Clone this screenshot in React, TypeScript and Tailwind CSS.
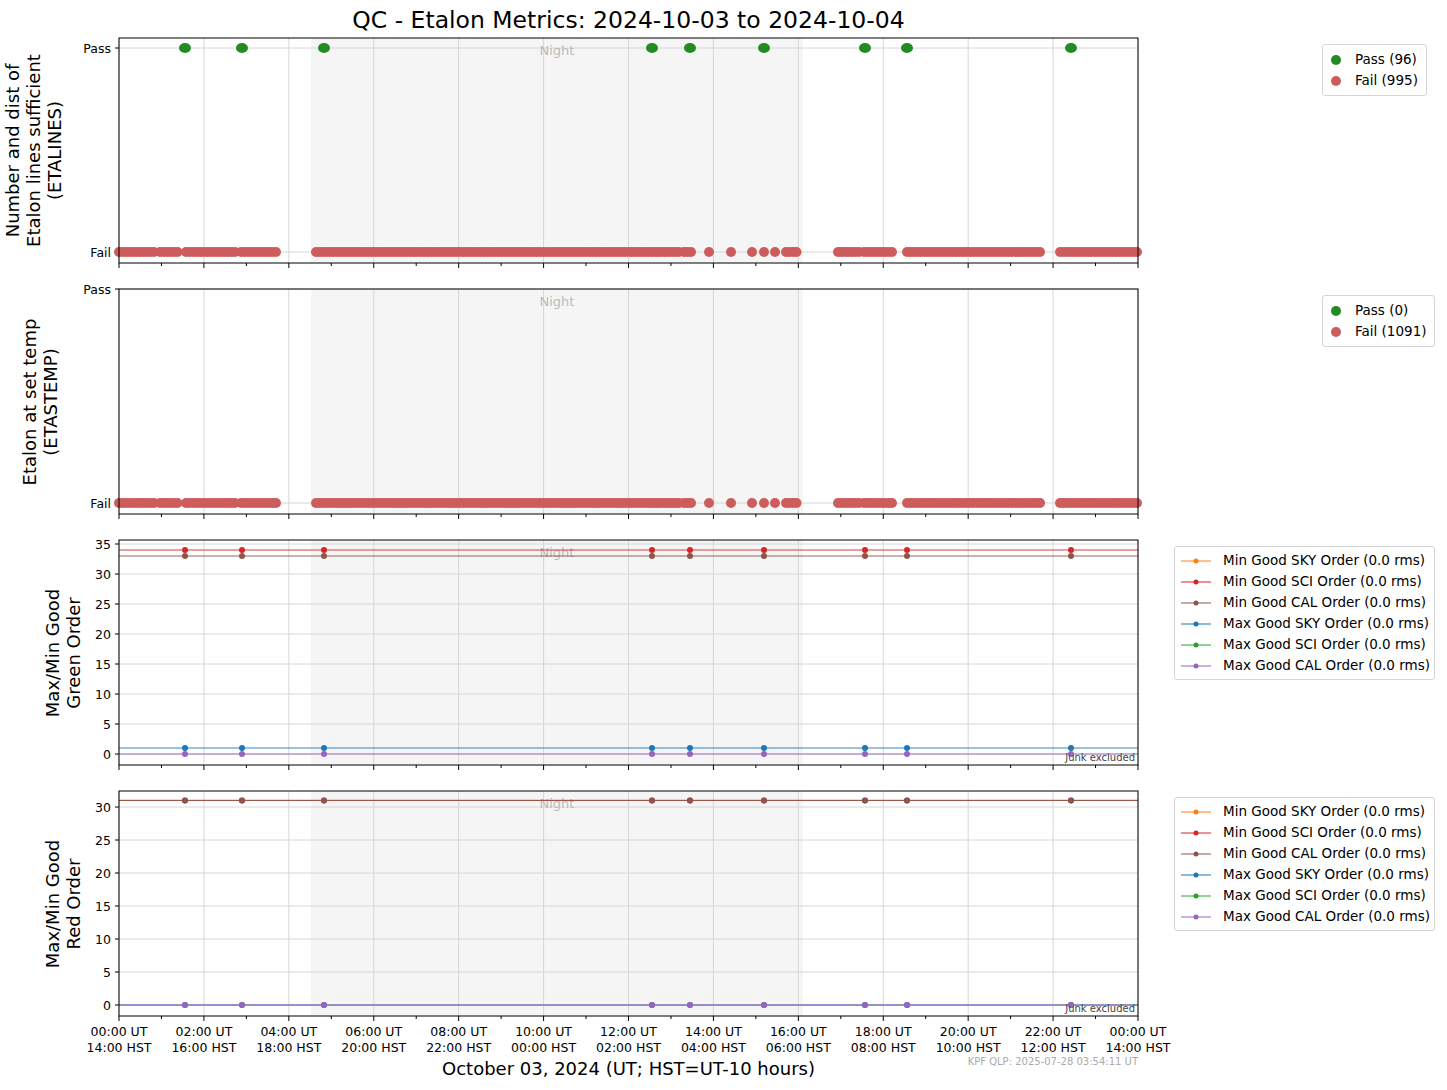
import React from "react";

const PW = 1019, PH = 225, OX = 19;
const hx = (h: number) => OX + (h / 24) * PW;
const passX = [185, 242, 324, 652, 690, 764, 865, 907, 1071].map((x) => x - 100);
const failRanges: [number, number][] = [[119,155],[160,178],[186,235],[241,277],[316,656],[658,680],[684,694],[709,709],[731,731],[752,752],[764,764],[775,775],[786,797],[838,860],[864,895],[907,1040],[1060,1138]];
const failX: number[] = [];
failRanges.forEach(([a, b]) => { for (let x = a; x <= b; x += 3.5) failX.push(x - 100); });

function Frame({ children, yTicks, bottomLabels, junk }: { children: React.ReactNode; yTicks: [number, string][]; bottomLabels?: boolean; junk?: boolean }) {
  const minor = Array.from({ length: 25 }, (_, i) => i);
  return (
    <svg width={1045} height={bottomLabels ? 262 : 226} style={{ overflow: "visible" }} fontFamily="DejaVu Sans, sans-serif">
      <rect x={hx(0)} y={0} width={PW} height={PH} fill="#fff" />
      <rect x={311 - 100} y={0} width={803 - 311} height={PH} fill="#f5f5f5" />
      {Array.from({ length: 13 }, (_, i) => (
        <line key={i} x1={hx(i * 2)} x2={hx(i * 2)} y1={0} y2={PH} stroke="#d6d6d6" strokeWidth={1} />
      ))}
      {yTicks.map(([y, t]) => (
        <g key={t}>
          <line x1={OX} x2={OX + PW} y1={y} y2={y} stroke="#d6d6d6" />
          <line x1={OX - 4} x2={OX} y1={y} y2={y} stroke="#000" />
          <text x={OX - 8} y={y + 4.5} fontSize={12.5} textAnchor="end">{t}</text>
        </g>
      ))}
      <text x={457} y={17} fontSize={13} fill="#bbb" textAnchor="middle">Night</text>
      {children}
      {junk && <text x={OX + PW - 3} y={PH - 4} fontSize={10} fill="#444" textAnchor="end">Junk excluded</text>}
      <rect x={OX} y={0} width={PW} height={PH} fill="none" stroke="#000" strokeWidth={1} />
      {minor.map((i) => (
        <line key={i} x1={hx(i)} x2={hx(i)} y1={PH} y2={PH + (i % 2 === 0 ? 5 : 3)} stroke="#000" />
      ))}
      {bottomLabels &&
        Array.from({ length: 13 }, (_, i) => {
          const ut = (i * 2) % 24;
          const hst = (ut + 14) % 24;
          const f = (n: number) => String(n).padStart(2, "0") + ":00";
          return (
            <text key={i} x={hx(i * 2)} fontSize={12.5} textAnchor="middle">
              <tspan x={hx(i * 2)} y={PH + 20}>{f(ut)} UT</tspan>
              <tspan x={hx(i * 2)} y={PH + 36}>{f(hst)} HST</tspan>
            </text>
          );
        })}
    </svg>
  );
}

function Label({ lines, w }: { lines: string[]; w: number }) {
  return (
    <div className="w-[100px] h-[225px] flex justify-end shrink-0">
      <div className="h-full flex items-center justify-center" style={{ width: w }}>
        <div className="-rotate-90 whitespace-nowrap text-center text-[18px] leading-[21px] text-black">
          {lines.map((l) => <div key={l}>{l}</div>)}
        </div>
      </div>
    </div>
  );
}

function PassLegend({ p, f }: { p: string; f: string }) {
  return (
    <div className="ml-[177px] mt-[6px] border border-[#d5d5d5] rounded-[3px] px-[8px] py-[4px] text-[13.5px] leading-[21px] self-start bg-white">
      <div className="flex items-center gap-[14px]"><span className="w-[10px] h-[10px] rounded-full bg-[#228b22]" />{p}</div>
      <div className="flex items-center gap-[14px]"><span className="w-[10px] h-[10px] rounded-full bg-[#cd5c5c]" />{f}</div>
    </div>
  );
}

const ORDER = [
  ["Min Good SKY Order (0.0 rms)", "#ff7f0e"],
  ["Min Good SCI Order (0.0 rms)", "#d62728"],
  ["Min Good CAL Order (0.0 rms)", "#8c564b"],
  ["Max Good SKY Order (0.0 rms)", "#1f77b4"],
  ["Max Good SCI Order (0.0 rms)", "#2ca02c"],
  ["Max Good CAL Order (0.0 rms)", "#9467bd"],
];

function OrderLegend() {
  return (
    <div className="ml-[29px] mt-[6px] border border-[#d5d5d5] rounded-[3px] pl-[6px] pr-[4px] py-[3px] text-[13.5px] leading-[21px] self-start bg-white">
      {ORDER.map(([t, c]) => (
        <div key={t} className="flex items-center gap-[12px]">
          <svg width={30} height={8}><line x1={0} x2={30} y1={4} y2={4} stroke={c} /><circle cx={15} cy={4} r={2.5} fill={c} /></svg>
          {t}
        </div>
      ))}
    </div>
  );
}

function PassFail({ pass }: { pass: boolean }) {
  return (
    <>
      {pass && passX.map((x, i) => <ellipse key={i} cx={x} cy={10} rx={6} ry={5} fill="#228b22" />)}
      {failX.map((x, i) => <circle key={i} cx={x} cy={214} r={5} fill="#cd5c5c" />)}
    </>
  );
}

function OrderPlot({ scale, series }: { scale: number; series: [number, string][] }) {
  return (
    <>
      {series.map(([v, c], k) => {
        const y = 214 - v * scale;
        return (
          <g key={k}>
            <line x1={OX} x2={OX + PW} y1={y} y2={y} stroke={c} strokeWidth={0.9} />
            {passX.map((x, i) => <circle key={i} cx={x} cy={y} r={3} fill={c} />)}
          </g>
        );
      })}
    </>
  );
}

export default function App() {
  const t3: [number, string][] = [0, 5, 10, 15, 20, 25, 30, 35].map((v) => [214 - v * 6, String(v)]);
  const t4: [number, string][] = [0, 5, 10, 15, 20, 25, 30].map((v) => [214 - v * 6.6, String(v)]);
  return (
    <div className="w-[1447px] h-[1090px] bg-white relative" style={{ fontFamily: "'DejaVu Sans', sans-serif" }}>
      <div className="h-[38px] flex items-center justify-center pr-[190px] text-[23.5px] pt-[4px]">
        QC - Etalon Metrics: 2024-10-03 to 2024-10-04
      </div>
      <div className="flex h-[251px]">
        <Label lines={["Number and dist of", "Etalon lines sufficient", "(ETALINES)"]} w={134} />
        <Frame yTicks={[[10, "Pass"], [214, "Fail"]]}><PassFail pass /></Frame>
        <PassLegend p="Pass (96)" f="Fail (995)" />
      </div>
      <div className="flex h-[251px]">
        <Label lines={["Etalon at set temp", "(ETASTEMP)"]} w={120} />
        <Frame yTicks={[[0, "Pass"], [214, "Fail"]]}><PassFail pass={false} /></Frame>
        <PassLegend p="Pass (0)" f="Fail (1091)" />
      </div>
      <div className="flex h-[251px]">
        <Label lines={["Max/Min Good", "Green Order"]} w={74} />
        <Frame yTicks={t3} junk>
          <OrderPlot scale={6} series={[[34, "#d62728"], [33, "#8c564b"], [1, "#1f77b4"], [0, "#9467bd"]]} />
        </Frame>
        <OrderLegend />
      </div>
      <div className="flex h-[264px]">
        <Label lines={["Max/Min Good", "Red Order"]} w={74} />
        <Frame yTicks={t4} bottomLabels junk>
          <OrderPlot scale={6.6} series={[[31, "#d62728"], [31, "#8c564b"], [0, "#1f77b4"], [0, "#9467bd"]]} />
        </Frame>
        <OrderLegend />
      </div>
      <div className="flex justify-end w-[1138px] h-[13px] leading-[13px] text-[10px] text-[#aaa]">KPF QLP: 2025-07-28 03:54:11 UT</div>
      <div className="w-[1257px] text-center text-[18px] h-[22px] leading-[22px] -mt-[10px]">October 03, 2024 (UT; HST=UT-10 hours)</div>
    </div>
  );
}
